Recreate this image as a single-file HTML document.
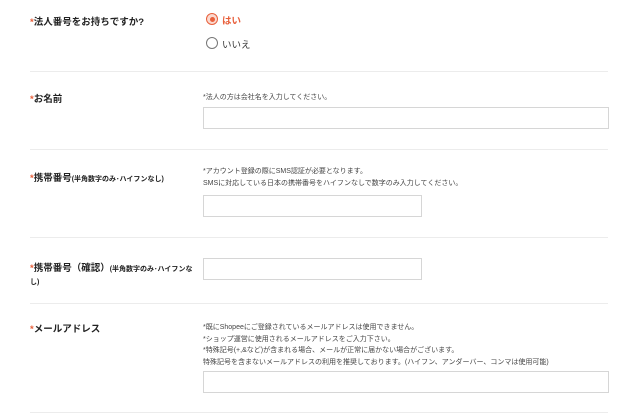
<!DOCTYPE html>
<html><head><meta charset="utf-8"><style>
*{margin:0;padding:0;box-sizing:border-box}
body{width:640px;height:414px;background:#fff;position:relative;overflow:hidden;font-family:"Liberation Sans","Noto Sans CJK JP",sans-serif;color:#333}
.a{position:absolute;white-space:nowrap}
.lab{font-size:9.5px;font-weight:bold;color:#222;letter-spacing:0}
.lab i{font-style:normal;color:#e8603c}
.lab small{font-size:7px;font-weight:bold}
.note{font-size:7px;color:#444;line-height:11.5px}
.hr{position:absolute;left:30px;width:578px;height:1px;background:#ececec}
.in{position:absolute;border:1px solid #d6d6d6;background:#fff}
.rd{position:absolute;width:12px;height:12px;border-radius:50%;border:1px solid #777}
</style></head><body>
<div class="a lab" style="left:30px;top:14px"><i>*</i>法人番号をお持ちですか?</div>
<div class="rd" style="left:206px;top:13px;border-color:#e8603c;background:#fbd9cf"><div style="position:absolute;left:2.5px;top:2.5px;width:5px;height:5px;border-radius:50%;background:#e8603c"></div></div>
<div class="a" style="left:222px;top:13px;font-size:9.5px;font-weight:bold;color:#e8603c">はい</div>
<div class="rd" style="left:206px;top:37px"></div>
<div class="a" style="left:222px;top:37px;font-size:9.5px;color:#333">いいえ</div>
<div class="hr" style="top:71px"></div>

<div class="a lab" style="left:30px;top:91px"><i>*</i>お名前</div>
<div class="a note" style="left:203px;top:92px">*法人の方は会社名を入力してください。</div>
<div class="in" style="left:203px;top:107px;width:406px;height:22px"></div>
<div class="hr" style="top:149px"></div>

<div class="a lab" style="left:30px;top:170px"><i>*</i>携帯番号<small>(半角数字のみ･ハイフンなし)</small></div>
<div class="a note" style="left:203px;top:166px">*アカウント登録の際にSMS認証が必要となります。<br>SMSに対応している日本の携帯番号をハイフンなしで数字のみ入力してください。</div>
<div class="in" style="left:203px;top:195px;width:219px;height:22px"></div>
<div class="hr" style="top:237px"></div>

<div class="a lab" style="left:30px;top:260px"><i>*</i>携帯番号（確認）<small>(半角数字のみ･ハイフンな</small></div>
<div class="a lab" style="left:30px;top:276px"><small>し)</small></div>
<div class="in" style="left:203px;top:258px;width:219px;height:22px"></div>
<div class="hr" style="top:303px"></div>

<div class="a lab" style="left:30px;top:321px"><i>*</i>メールアドレス</div>
<div class="a note" style="left:203px;top:322px">*既にShopeeにご登録されているメールアドレスは使用できません。<br>*ショップ運営に使用されるメールアドレスをご入力下さい。<br>*特殊記号(+,&amp;など)が含まれる場合、メールが正常に届かない場合がございます。<br>特殊記号を含まないメールアドレスの利用を推奨しております。(ハイフン、アンダーバー、コンマは使用可能)</div>
<div class="in" style="left:203px;top:371px;width:406px;height:22px"></div>
<div class="hr" style="top:412px"></div>
</body></html>
